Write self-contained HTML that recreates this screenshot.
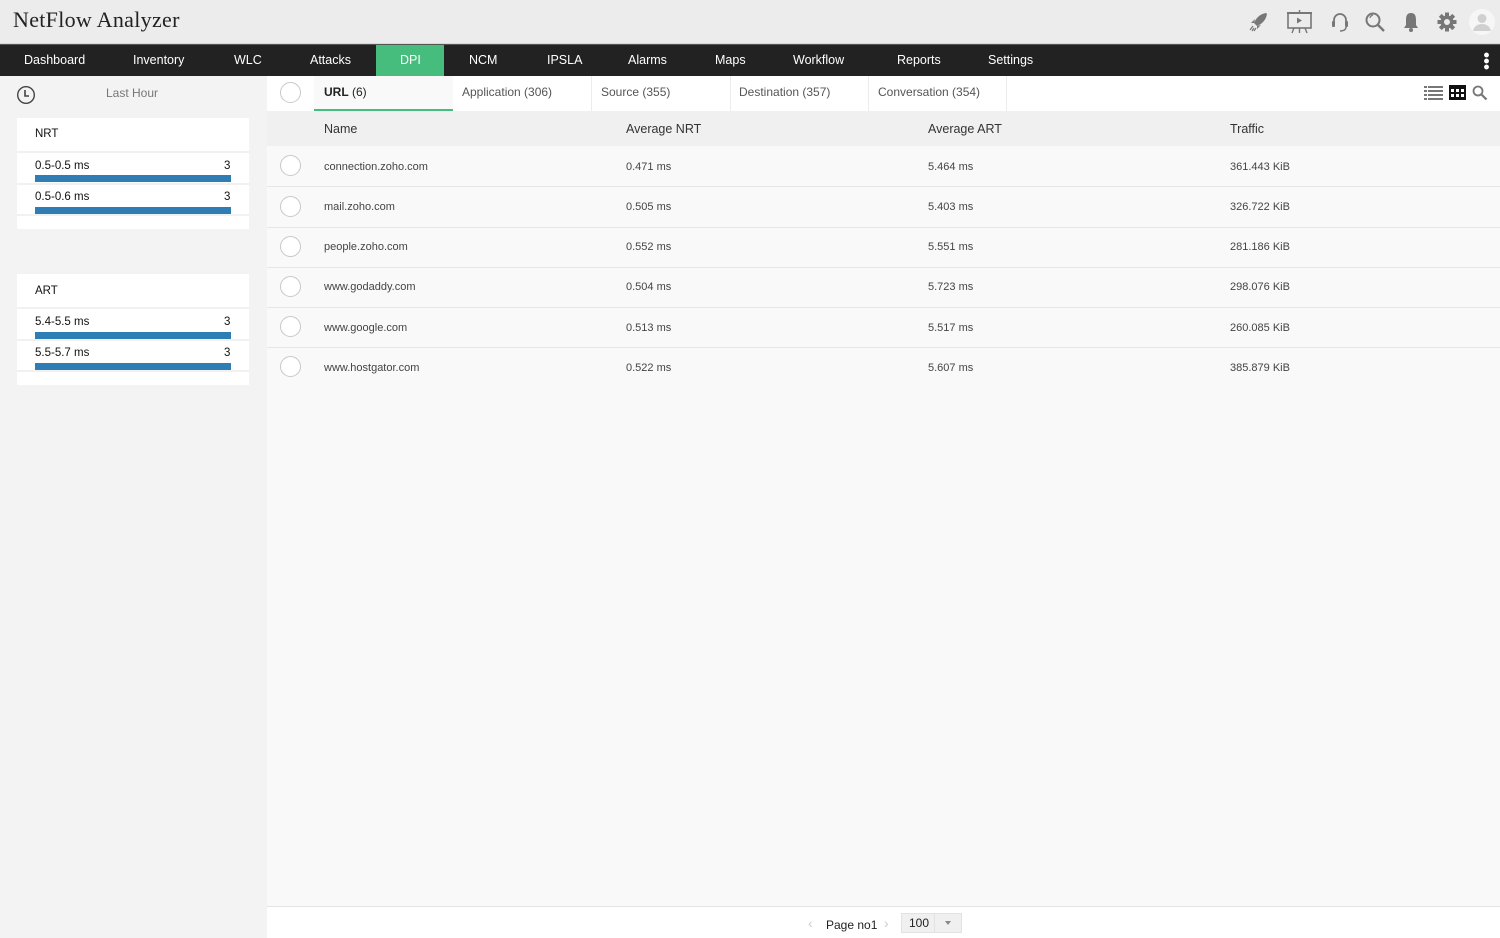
<!DOCTYPE html>
<html><head><meta charset="utf-8"><style>
*{margin:0;padding:0;box-sizing:border-box}
body{width:1500px;height:938px;overflow:hidden;font-family:"Liberation Sans",sans-serif;background:#f3f3f3;position:relative;color:#222}
.a{position:absolute;white-space:nowrap}
#hdr{left:0;top:0;width:1500px;height:44px;background:#ececec;border-bottom:1px solid #d8d8d8}
#logo{left:13px;top:7px;font-family:"Liberation Serif",serif;font-size:22px;color:#222;letter-spacing:.3px}
#nav{left:0;top:44px;width:1500px;height:32px;background:#222;border-top:1px solid #555}
#nav .t{top:8px;font-size:12.5px;color:#fff}
#nav #dpi{left:376px;top:0;width:68px;height:31px;background:#46bd7c}
#main{left:267px;top:76px;width:1233px;height:862px;background:#f9f9f9}
#tabs{left:267px;top:76px;width:1233px;height:35px;background:#fff}
.tab{top:85px;font-size:12px;color:#555}
.sep{top:76px;width:1px;height:35px;background:#ececec}
.circ{width:21px;height:21px;border:1px solid #c8c8c8;border-radius:50%;background:#fff}
#th{left:267px;top:111px;width:1233px;height:35px;background:#f0f0f0}
.th{top:122px;font-size:12.5px;color:#333}
.row{left:267px;width:1233px;height:40px;border-bottom:1px solid #e6e6e6;background:#f9f9f9}
.td{font-size:11px;color:#444}
.card{left:17px;width:232px;background:#fff}
.ct{font-size:11.5px;color:#111}
.bar{left:35px;width:196px;height:7px;background:#2e7db5}
.line{left:17px;width:232px;height:2px;background:#f1f1f1}
#foot{left:267px;top:906px;width:1233px;height:32px;background:#fff;border-top:1px solid #e4e4e4}
</style></head><body>
<div class="a" id="hdr"></div>
<div class="a" id="logo">NetFlow Analyzer</div>
<svg class="a" style="left:1248px;top:10px" width="22" height="24" viewBox="0 0 22 24"><path d="M18 3 C12 4 8 8 6 13 L9 16 C14 14 18 10 19 4 Z" fill="#777"/><path d="M6 13 L3 13 L7 9 Z M9 16 L9 19 L13 15 Z" fill="#777"/><path d="M5 16 L2 20 M6 18 L4 21 M8 18 L6 21" stroke="#777" stroke-width="1.2"/></svg>
<svg class="a" style="left:1286px;top:9px" width="27" height="26" viewBox="0 0 27 26"><rect x="2" y="4" width="23" height="15" fill="none" stroke="#777" stroke-width="1.6"/><path d="M1 4h25" stroke="#777" stroke-width="2"/><path d="M13.5 1v3M8 19l-2 5M19 19l2 5M13.5 19v5" stroke="#777" stroke-width="1.4"/><path d="M11 8.5l5 3-5 3z" fill="#777"/></svg>
<svg class="a" style="left:1330px;top:11px" width="20" height="22" viewBox="0 0 20 22"><path d="M4 12V9a6 6 0 0 1 12 0v3" fill="none" stroke="#777" stroke-width="1.8"/><rect x="2" y="10" width="3" height="6" rx="1" fill="#777"/><rect x="15" y="10" width="3" height="6" rx="1" fill="#777"/><path d="M16 16c0 3-3 4-6 4" fill="none" stroke="#777" stroke-width="1.5"/></svg>
<svg class="a" style="left:1364px;top:11px" width="22" height="22" viewBox="0 0 22 22"><circle cx="9" cy="9" r="6.5" fill="none" stroke="#777" stroke-width="2"/><path d="M6 7a4 4 0 0 1 3-3" stroke="#777" stroke-width="1.2" fill="none"/><path d="M14 14l6 6" stroke="#777" stroke-width="2.4"/></svg>
<svg class="a" style="left:1401px;top:11px" width="20" height="22" viewBox="0 0 20 22"><path d="M10 2c-4 0-5 3-5 7v5l-2 3h14l-2-3V9c0-4-1-7-5-7z" fill="#777"/><circle cx="10" cy="19" r="2" fill="#777"/></svg>
<svg class="a" style="left:1436px;top:11px" width="22" height="22" viewBox="0 0 22 22"><g fill="#777"><circle cx="11" cy="11" r="6.5"/><rect x="9" y="1.5" width="4" height="19"/><rect x="1.5" y="9" width="19" height="4"/><rect x="9" y="1.5" width="4" height="19" transform="rotate(45 11 11)"/><rect x="9" y="1.5" width="4" height="19" transform="rotate(-45 11 11)"/></g><circle cx="11" cy="11" r="3" fill="#ececec"/></svg>
<svg class="a" style="left:1469px;top:9px" width="26" height="26" viewBox="0 0 26 26"><circle cx="13" cy="13" r="13" fill="#f6f6f6"/><circle cx="13" cy="9.5" r="4.5" fill="#d0d0d0"/><path d="M4 22c1-5 5-7 9-7s8 2 9 7z" fill="#d0d0d0"/></svg>

<div class="a" id="nav">
<div class="a" id="dpi"></div>
<div class="a t" style="left:24px">Dashboard</div>
<div class="a t" style="left:133px">Inventory</div>
<div class="a t" style="left:234px">WLC</div>
<div class="a t" style="left:310px">Attacks</div>
<div class="a t" style="left:400px">DPI</div>
<div class="a t" style="left:469px">NCM</div>
<div class="a t" style="left:547px">IPSLA</div>
<div class="a t" style="left:628px">Alarms</div>
<div class="a t" style="left:715px">Maps</div>
<div class="a t" style="left:793px">Workflow</div>
<div class="a t" style="left:897px">Reports</div>
<div class="a t" style="left:988px">Settings</div>
<div class="a" style="left:1484px;top:7px;width:5px;height:18px;background:radial-gradient(circle,#fff 2.2px,transparent 2.6px) 0 0/5px 6px"></div>
</div>

<svg class="a" style="left:16px;top:85px" width="20" height="20" viewBox="0 0 20 20"><circle cx="10" cy="10" r="8.3" fill="none" stroke="#444" stroke-width="1.4"/><path d="M9 5v6h4" fill="none" stroke="#444" stroke-width="1.6"/></svg>
<div class="a" style="left:106px;top:86px;font-size:12px;color:#777">Last Hour</div>

<div class="a card" style="top:118px;height:111px"></div>
<div class="a line" style="top:151px"></div><div class="a line" style="top:183px"></div><div class="a line" style="top:214px"></div>
<div class="a ct" style="left:35px;top:128px">NRT</div>
<div class="a ct" style="left:35px;top:160px">0.5-0.5 ms</div><div class="a ct" style="left:224px;top:160px">3</div>
<div class="a bar" style="top:175px"></div>
<div class="a ct" style="left:35px;top:191px">0.5-0.6 ms</div><div class="a ct" style="left:224px;top:191px">3</div>
<div class="a bar" style="top:207px"></div>

<div class="a card" style="top:274px;height:111px"></div>
<div class="a line" style="top:307px"></div><div class="a line" style="top:339px"></div><div class="a line" style="top:370px"></div>
<div class="a ct" style="left:35px;top:285px">ART</div>
<div class="a ct" style="left:35px;top:316px">5.4-5.5 ms</div><div class="a ct" style="left:224px;top:316px">3</div>
<div class="a bar" style="top:332px"></div>
<div class="a ct" style="left:35px;top:347px">5.5-5.7 ms</div><div class="a ct" style="left:224px;top:347px">3</div>
<div class="a bar" style="top:363px"></div>

<div class="a" id="main"></div>
<div class="a" id="tabs"></div>
<div class="a circ" style="left:280px;top:82px"></div>
<div class="a" style="left:314px;top:76px;width:139px;height:35px;background:#f9f9f9;border-bottom:2px solid #46bd7c"></div>
<div class="a tab" style="left:324px;color:#222"><b>URL</b> (6)</div>
<div class="a tab" style="left:462px">Application (306)</div>
<div class="a tab" style="left:601px">Source (355)</div>
<div class="a tab" style="left:739px">Destination (357)</div>
<div class="a tab" style="left:878px">Conversation (354)</div>
<div class="a sep" style="left:591px"></div><div class="a sep" style="left:730px"></div><div class="a sep" style="left:868px"></div><div class="a sep" style="left:1006px"></div>
<svg class="a" style="left:1424px;top:85px" width="19" height="15" viewBox="0 0 19 15"><g fill="#777"><rect x="0" y="1" width="3" height="2"/><rect x="4" y="1" width="15" height="2"/><rect x="0" y="5" width="3" height="2"/><rect x="4" y="5" width="15" height="2"/><rect x="0" y="9" width="3" height="2"/><rect x="4" y="9" width="15" height="2"/><rect x="0" y="13" width="3" height="2"/><rect x="4" y="13" width="15" height="2"/></g></svg>
<svg class="a" style="left:1449px;top:85px" width="17" height="15" viewBox="0 0 17 15"><rect x="0" y="0" width="17" height="15" fill="#111"/><g fill="#fff"><rect x="2" y="4" width="3" height="3"/><rect x="7" y="4" width="3" height="3"/><rect x="12" y="4" width="3" height="3"/><rect x="2" y="9" width="3" height="3"/><rect x="7" y="9" width="3" height="3"/><rect x="12" y="9" width="3" height="3"/></g></svg>
<svg class="a" style="left:1472px;top:85px" width="16" height="16" viewBox="0 0 16 16"><circle cx="6" cy="6" r="4.5" fill="none" stroke="#777" stroke-width="1.8"/><path d="M9.5 9.5l5 5" stroke="#777" stroke-width="2.2"/></svg>

<div class="a" id="th"></div>
<div class="a th" style="left:324px">Name</div>
<div class="a th" style="left:626px">Average NRT</div>
<div class="a th" style="left:928px">Average ART</div>
<div class="a th" style="left:1230px">Traffic</div>

<div class="a row" style="top:147px"></div>
<div class="a row" style="top:188px"></div>
<div class="a row" style="top:228px"></div>
<div class="a row" style="top:268px"></div>
<div class="a row" style="top:308px"></div>
<div class="a row" style="top:348px;border-bottom:none"></div>

<div class="a circ" style="left:280px;top:155px"></div>
<div class="a td" style="left:324px;top:161px">connection.zoho.com</div><div class="a td" style="left:626px;top:161px">0.471 ms</div><div class="a td" style="left:928px;top:161px">5.464 ms</div><div class="a td" style="left:1230px;top:161px">361.443 KiB</div>
<div class="a circ" style="left:280px;top:196px"></div>
<div class="a td" style="left:324px;top:201px">mail.zoho.com</div><div class="a td" style="left:626px;top:201px">0.505 ms</div><div class="a td" style="left:928px;top:201px">5.403 ms</div><div class="a td" style="left:1230px;top:201px">326.722 KiB</div>
<div class="a circ" style="left:280px;top:236px"></div>
<div class="a td" style="left:324px;top:241px">people.zoho.com</div><div class="a td" style="left:626px;top:241px">0.552 ms</div><div class="a td" style="left:928px;top:241px">5.551 ms</div><div class="a td" style="left:1230px;top:241px">281.186 KiB</div>
<div class="a circ" style="left:280px;top:276px"></div>
<div class="a td" style="left:324px;top:281px">www.godaddy.com</div><div class="a td" style="left:626px;top:281px">0.504 ms</div><div class="a td" style="left:928px;top:281px">5.723 ms</div><div class="a td" style="left:1230px;top:281px">298.076 KiB</div>
<div class="a circ" style="left:280px;top:316px"></div>
<div class="a td" style="left:324px;top:322px">www.google.com</div><div class="a td" style="left:626px;top:322px">0.513 ms</div><div class="a td" style="left:928px;top:322px">5.517 ms</div><div class="a td" style="left:1230px;top:322px">260.085 KiB</div>
<div class="a circ" style="left:280px;top:356px"></div>
<div class="a td" style="left:324px;top:362px">www.hostgator.com</div><div class="a td" style="left:626px;top:362px">0.522 ms</div><div class="a td" style="left:928px;top:362px">5.607 ms</div><div class="a td" style="left:1230px;top:362px">385.879 KiB</div>

<div class="a" id="foot"></div>
<div class="a" style="left:808px;top:915px;font-size:14px;color:#ccc">‹</div>
<div class="a" style="left:826px;top:918px;font-size:12px;color:#222">Page no1</div>
<div class="a" style="left:884px;top:915px;font-size:14px;color:#ccc">›</div>
<div class="a" style="left:901px;top:913px;width:61px;height:20px;background:#f0f0f0;border:1px solid #e2e2e2"></div>
<div class="a" style="left:934px;top:913px;width:1px;height:20px;background:#e2e2e2"></div>
<div class="a" style="left:909px;top:916px;font-size:12px;color:#222">100</div>
<div class="a" style="left:945px;top:921px;width:0;height:0;border-left:3px solid transparent;border-right:3px solid transparent;border-top:4px solid #888"></div>
</body></html>
